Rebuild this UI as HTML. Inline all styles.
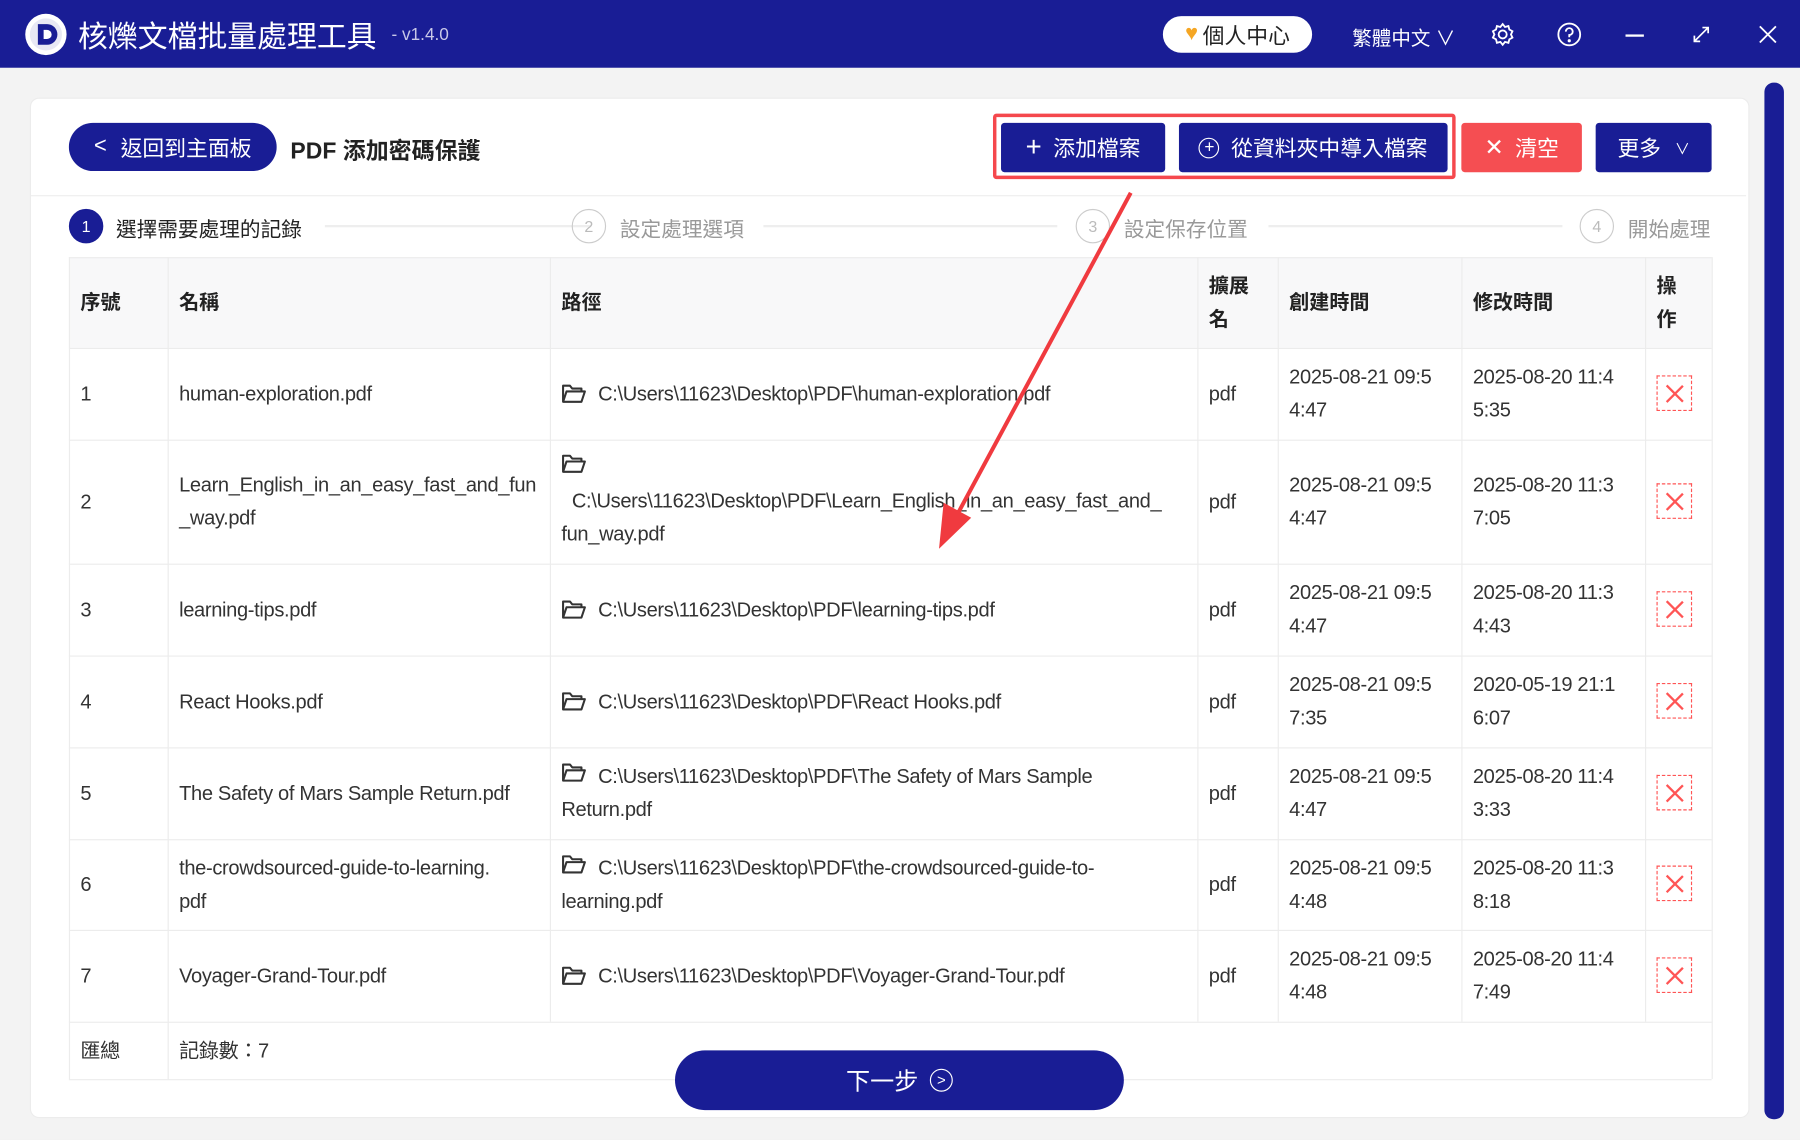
<!DOCTYPE html>
<html><head><meta charset="utf-8"><style>
html,body{margin:0;padding:0;width:1800px;height:1140px;overflow:hidden;background:#f2f2f2}
#w{position:absolute;left:0;top:0;width:1568px;height:993px;transform:scale(1.14796);transform-origin:0 0;font-family:"Liberation Sans","Noto Sans CJK TC",sans-serif;color:#333;background:#f3f3f3}
.a{position:absolute}
.tb{left:0;top:0;width:1568px;height:59px;background:#191d95}
.btn{position:absolute;color:#fff;font-size:19px;display:flex;align-items:center;justify-content:center;border-radius:3px}
.blue{background:#191d95}
.panel{left:26px;top:85px;width:1496px;height:887px;background:#fff;border-radius:8px;border:1px solid #ececec}
.step{font-size:18px;color:#999}
.circ{position:absolute;width:28px;height:28px;border-radius:50%;border:1px solid #ccc;color:#bbb;font-size:14px;text-align:center;line-height:28px}
.line{position:absolute;height:2px;background:#eee;top:196px}
.cell{position:absolute;font-size:17.5px;letter-spacing:-0.3px;line-height:29px;color:#333;box-sizing:border-box;padding-left:10px;display:flex;align-items:center}
.hd{font-weight:bold;color:#222;letter-spacing:0}
.vl{position:absolute;width:1px;background:#ececec}
.hl{position:absolute;height:1px;background:#ececec;left:60px;width:1431px}
.del{position:absolute;width:31px;height:31px;border:1px dashed #f55;box-sizing:border-box}
.del:before,.del:after{content:"";position:absolute;left:14px;top:5px;width:1.5px;height:20px;background:#f55;transform:rotate(45deg)}
.del:after{transform:rotate(-45deg)}
</style></head><body><div id="w">
<div class="a tb"></div>
<svg class="a" style="left:21px;top:11px" width="38" height="38" viewBox="0 0 38 38"><circle cx="19" cy="19" r="18" fill="#fff"/><circle cx="19" cy="19" r="14" fill="#e8e8f4"/><path d="M12 10h8a9 9 0 0 1 0 18h-8z" fill="#191d95"/><path d="M17 15h3a4 4 0 0 1 0 8h-3z" fill="#fff"/></svg>
<div class="a" style="left:68px;top:12px;font-size:26px;color:#fff">核爍文檔批量處理工具</div>
<div class="a" style="left:341px;top:22px;font-size:15px;color:#c8c8e8">- v1.4.0</div>
<div class="a" style="left:1013px;top:14px;width:130px;height:32px;border-radius:16px;background:#fff;font-size:19px;color:#222;display:flex;align-items:center;justify-content:center"><span style="color:#f5a623;margin-right:4px">♥</span>個人中心</div>
<div class="a" style="left:1178px;top:19px;font-size:17px;color:#fff">繁體中文 ∨</div>
<svg class="a" style="left:1298px;top:19px" width="22" height="22" viewBox="0 0 22 22" fill="none" stroke="#fff" stroke-width="1.6"><circle cx="11" cy="11" r="3.5"/><path d="M11 2l2 2.5 3-.8 .8 3 2.7 1.5-1.3 2.8 1.3 2.8-2.7 1.5-.8 3-3-.8-2 2.5-2-2.5-3 .8-.8-3-2.7-1.5 1.3-2.8-1.3-2.8 2.7-1.5 .8-3 3 .8z"/></svg>
<svg class="a" style="left:1356px;top:19px" width="22" height="22" viewBox="0 0 22 22" fill="none" stroke="#fff" stroke-width="1.6"><circle cx="11" cy="11" r="9.5"/><path d="M8 8.5a3 3 0 1 1 3 3v2"/><circle cx="11" cy="16.5" r=".6" fill="#fff"/></svg>
<div class="a" style="left:1416px;top:30px;width:16px;height:2px;background:#fff"></div>
<svg class="a" style="left:1474px;top:22px" width="16" height="16" viewBox="0 0 16 16" stroke="#fff" stroke-width="1.5" fill="none"><path d="M2 14L14 2M9 2h5v5M2 9v5h5"/></svg>
<svg class="a" style="left:1532px;top:22px" width="16" height="16" viewBox="0 0 16 16" stroke="#fff" stroke-width="1.6"><path d="M1 1L15 15M15 1L1 15"/></svg>
<div class="a" style="left:1537px;top:72px;width:17px;height:903px;background:#191d95;border-radius:8px"></div>
<div class="a panel"></div>
<div class="btn blue" style="left:60px;top:107px;width:181px;height:42px;border-radius:21px"><span style="margin-right:12px">&lt;</span>返回到主面板</div>
<div class="a" style="left:253px;top:115px;font-size:20px;font-weight:bold;color:#222">PDF 添加密碼保護</div>
<div class="a" style="left:865px;top:99px;width:397px;height:51px;border:3px solid #f5484d;border-radius:3px"></div>
<div class="btn blue" style="left:872px;top:107px;width:143px;height:43px"><span style="font-size:24px;margin-right:10px;font-weight:300">+</span>添加檔案</div>
<div class="btn blue" style="left:1027px;top:107px;width:234px;height:43px"><span style="display:inline-block;width:16px;height:16px;border:1.5px solid #fff;border-radius:50%;font-size:15px;line-height:16px;text-align:center;margin-right:10px">+</span>從資料夾中導入檔案</div>
<div class="btn" style="left:1273px;top:107px;width:105px;height:43px;background:#f54e52"><span style="font-size:20px;margin-right:10px">✕</span>清空</div>
<div class="btn blue" style="left:1390px;top:107px;width:101px;height:43px">更多<span style="font-size:13px;margin-left:12px">∨</span></div>
<div class="a" style="left:27px;top:170px;width:1494px;height:1px;background:#eee"></div>
<div class="circ" style="left:60px;top:182px;background:#191d95;border-color:#191d95;color:#fff">1</div>
<div class="a step" style="left:101px;top:186px;color:#222">選擇需要處理的記錄</div>
<div class="line" style="left:283px;width:232px"></div>
<div class="circ" style="left:498px;top:182px">2</div>
<div class="a step" style="left:540px;top:186px">設定處理選項</div>
<div class="line" style="left:665px;width:256px"></div>
<div class="circ" style="left:937px;top:182px">3</div>
<div class="a step" style="left:979px;top:186px">設定保存位置</div>
<div class="line" style="left:1105px;width:256px"></div>
<div class="circ" style="left:1376px;top:182px">4</div>
<div class="a step" style="left:1418px;top:186px">開始處理</div>
<div class="a" style="left:60px;top:224px;width:1431px;height:79px;background:#f8f8f9"></div>
<div class="hl" style="top:224px"></div><div class="hl" style="top:303px"></div><div class="hl" style="top:383px"></div><div class="hl" style="top:491px"></div><div class="hl" style="top:571px"></div><div class="hl" style="top:651px"></div><div class="hl" style="top:731px"></div><div class="hl" style="top:810px"></div><div class="hl" style="top:890px"></div><div class="hl" style="top:940px"></div>
<div class="vl" style="left:60px;top:224px;height:716px"></div><div class="vl" style="left:146px;top:224px;height:716px"></div>
<div class="vl" style="left:479px;top:224px;height:666px"></div><div class="vl" style="left:1043px;top:224px;height:666px"></div><div class="vl" style="left:1113px;top:224px;height:666px"></div><div class="vl" style="left:1273px;top:224px;height:666px"></div><div class="vl" style="left:1433px;top:224px;height:666px"></div><div class="vl" style="left:1491px;top:224px;height:716px"></div>
<div class="cell hd" style="left:60px;top:224px;width:86px;height:79px">序號</div>
<div class="cell hd" style="left:146px;top:224px;width:333px;height:79px">名稱</div>
<div class="cell hd" style="left:479px;top:224px;width:564px;height:79px">路徑</div>
<div class="cell hd" style="left:1043px;top:224px;width:70px;height:79px">擴展<br>名</div>
<div class="cell hd" style="left:1113px;top:224px;width:160px;height:79px">創建時間</div>
<div class="cell hd" style="left:1273px;top:224px;width:160px;height:79px">修改時間</div>
<div class="cell hd" style="left:1433px;top:224px;width:58px;height:79px">操<br>作</div>
<svg width="0" height="0" style="position:absolute"><defs><symbol id="f" viewBox="0 0 22 18"><path d="M1.5 16V2h6l2 2.5h8V7M1.5 16l3-9h16l-3 9z" fill="none" stroke="#333" stroke-width="1.8" stroke-linejoin="round"/></symbol></defs></svg>
<div class="cell" style="left:60px;top:303px;width:86px;height:80px">1</div>
<div class="cell" style="left:146px;top:303px;width:333px;height:80px">human-exploration.pdf</div>
<div class="cell" style="left:479px;top:303px;width:564px;height:80px"><svg width="22" height="18" style="margin-right:10px"><use href="#f"/></svg>C:\Users\11623\Desktop\PDF\human-exploration.pdf</div>
<div class="cell" style="left:1043px;top:303px;width:70px;height:80px">pdf</div>
<div class="cell" style="left:1113px;top:303px;width:160px;height:80px">2025-08-21 09:5<br>4:47</div>
<div class="cell" style="left:1273px;top:303px;width:160px;height:80px">2025-08-20 11:4<br>5:35</div>
<div class="del" style="left:1443px;top:327px"></div>

<div class="cell" style="left:60px;top:383px;width:86px;height:108px">2</div>
<div class="cell" style="left:146px;top:383px;width:333px;height:108px">Learn_English_in_an_easy_fast_and_fun<br>_way.pdf</div>
<div class="cell" style="left:479px;top:383px;width:564px;height:108px;display:block;padding-top:10px"><svg width="22" height="18"><use href="#f"/></svg><br>&nbsp;&nbsp;C:\Users\11623\Desktop\PDF\Learn_English_in_an_easy_fast_and_<br>fun_way.pdf</div>
<div class="cell" style="left:1043px;top:383px;width:70px;height:108px">pdf</div>
<div class="cell" style="left:1113px;top:383px;width:160px;height:108px">2025-08-21 09:5<br>4:47</div>
<div class="cell" style="left:1273px;top:383px;width:160px;height:108px">2025-08-20 11:3<br>7:05</div>
<div class="del" style="left:1443px;top:421px"></div>

<div class="cell" style="left:60px;top:491px;width:86px;height:80px">3</div>
<div class="cell" style="left:146px;top:491px;width:333px;height:80px">learning-tips.pdf</div>
<div class="cell" style="left:479px;top:491px;width:564px;height:80px"><svg width="22" height="18" style="margin-right:10px"><use href="#f"/></svg>C:\Users\11623\Desktop\PDF\learning-tips.pdf</div>
<div class="cell" style="left:1043px;top:491px;width:70px;height:80px">pdf</div>
<div class="cell" style="left:1113px;top:491px;width:160px;height:80px">2025-08-21 09:5<br>4:47</div>
<div class="cell" style="left:1273px;top:491px;width:160px;height:80px">2025-08-20 11:3<br>4:43</div>
<div class="del" style="left:1443px;top:515px"></div>

<div class="cell" style="left:60px;top:571px;width:86px;height:80px">4</div>
<div class="cell" style="left:146px;top:571px;width:333px;height:80px">React Hooks.pdf</div>
<div class="cell" style="left:479px;top:571px;width:564px;height:80px"><svg width="22" height="18" style="margin-right:10px"><use href="#f"/></svg>C:\Users\11623\Desktop\PDF\React Hooks.pdf</div>
<div class="cell" style="left:1043px;top:571px;width:70px;height:80px">pdf</div>
<div class="cell" style="left:1113px;top:571px;width:160px;height:80px">2025-08-21 09:5<br>7:35</div>
<div class="cell" style="left:1273px;top:571px;width:160px;height:80px">2020-05-19 21:1<br>6:07</div>
<div class="del" style="left:1443px;top:595px"></div>

<div class="cell" style="left:60px;top:651px;width:86px;height:80px">5</div>
<div class="cell" style="left:146px;top:651px;width:333px;height:80px">The Safety of Mars Sample Return.pdf</div>
<div class="cell" style="left:479px;top:651px;width:564px;height:80px;display:block;padding-top:11px"><svg width="22" height="18" style="margin-right:10px"><use href="#f"/></svg>C:\Users\11623\Desktop\PDF\The Safety of Mars Sample<br>Return.pdf</div>
<div class="cell" style="left:1043px;top:651px;width:70px;height:80px">pdf</div>
<div class="cell" style="left:1113px;top:651px;width:160px;height:80px">2025-08-21 09:5<br>4:47</div>
<div class="cell" style="left:1273px;top:651px;width:160px;height:80px">2025-08-20 11:4<br>3:33</div>
<div class="del" style="left:1443px;top:675px"></div>

<div class="cell" style="left:60px;top:731px;width:86px;height:79px">6</div>
<div class="cell" style="left:146px;top:731px;width:333px;height:79px">the-crowdsourced-guide-to-learning.<br>pdf</div>
<div class="cell" style="left:479px;top:731px;width:564px;height:79px;display:block;padding-top:11px"><svg width="22" height="18" style="margin-right:10px"><use href="#f"/></svg>C:\Users\11623\Desktop\PDF\the-crowdsourced-guide-to-<br>learning.pdf</div>
<div class="cell" style="left:1043px;top:731px;width:70px;height:79px">pdf</div>
<div class="cell" style="left:1113px;top:731px;width:160px;height:79px">2025-08-21 09:5<br>4:48</div>
<div class="cell" style="left:1273px;top:731px;width:160px;height:79px">2025-08-20 11:3<br>8:18</div>
<div class="del" style="left:1443px;top:754px"></div>

<div class="cell" style="left:60px;top:810px;width:86px;height:80px">7</div>
<div class="cell" style="left:146px;top:810px;width:333px;height:80px">Voyager-Grand-Tour.pdf</div>
<div class="cell" style="left:479px;top:810px;width:564px;height:80px"><svg width="22" height="18" style="margin-right:10px"><use href="#f"/></svg>C:\Users\11623\Desktop\PDF\Voyager-Grand-Tour.pdf</div>
<div class="cell" style="left:1043px;top:810px;width:70px;height:80px">pdf</div>
<div class="cell" style="left:1113px;top:810px;width:160px;height:80px">2025-08-21 09:5<br>4:48</div>
<div class="cell" style="left:1273px;top:810px;width:160px;height:80px">2025-08-20 11:4<br>7:49</div>
<div class="del" style="left:1443px;top:834px"></div>

<div class="cell" style="left:60px;top:890px;width:86px;height:50px">匯總</div>
<div class="cell" style="left:146px;top:890px;width:333px;height:50px">記錄數：7</div>
<div class="btn blue" style="left:588px;top:915px;width:391px;height:52px;border-radius:26px;font-size:21px">下一步<span style="display:inline-block;width:18px;height:18px;border:1.8px solid #fff;border-radius:50%;font-size:13px;line-height:18px;text-align:center;margin-left:10px">&gt;</span></div>
<svg class="a" style="left:0;top:0" width="1568" height="993"><line x1="985" y1="168" x2="834" y2="448" stroke="#f03a3f" stroke-width="3.5"/><path d="M818 478L822 438L846 451Z" fill="#f03a3f"/></svg>
</div></body></html>
